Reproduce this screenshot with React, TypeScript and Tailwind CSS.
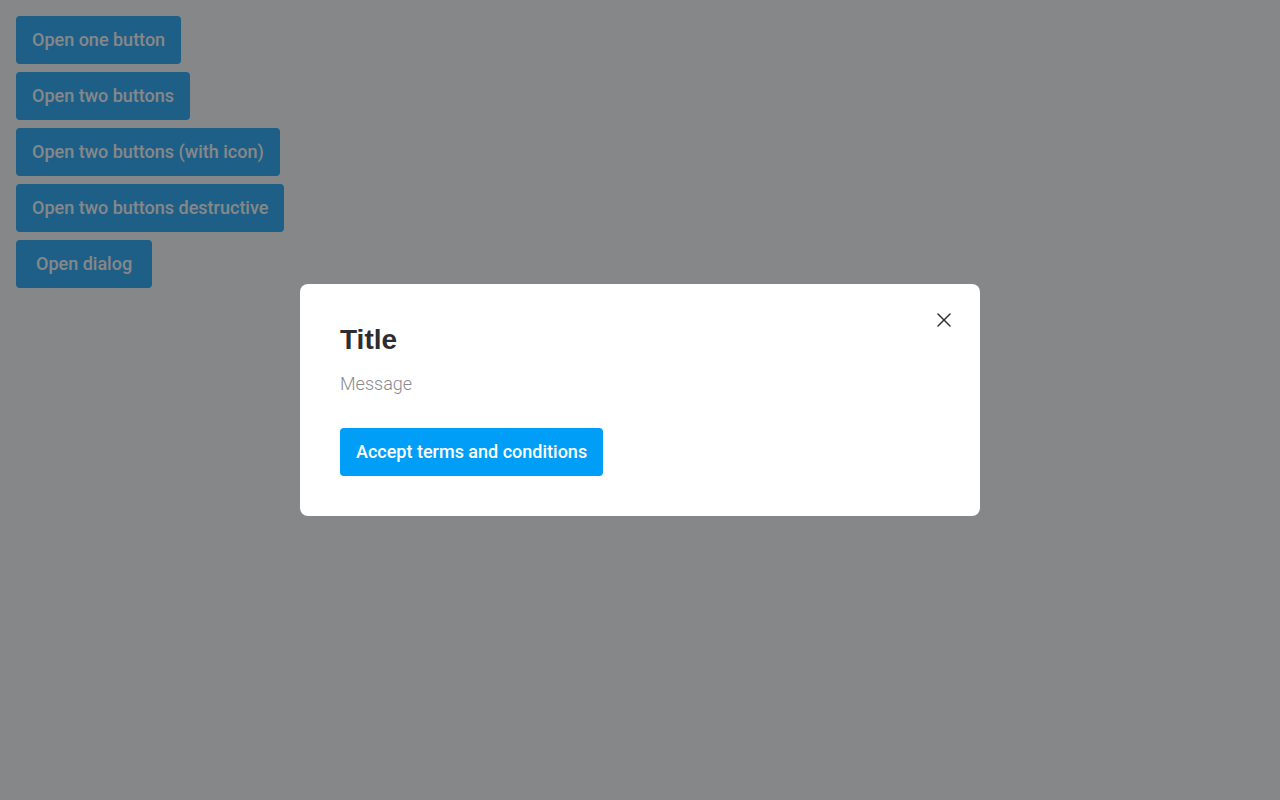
import { X } from 'lucide-react';

const triggers = [
  { label: 'Open one button', pad: 'px-4' },
  { label: 'Open two buttons', pad: 'px-4' },
  { label: 'Open two buttons (with icon)', pad: 'px-4' },
  { label: 'Open two buttons destructive', pad: 'px-4' },
  { label: 'Open dialog', pad: 'px-5' },
];

export default function App() {
  return (
    <div className="relative h-[800px] w-[1280px] overflow-hidden bg-white font-['Roboto',sans-serif]">
      <div className="flex flex-col items-start gap-2 p-4">
        {triggers.map((t) => (
          <button
            key={t.label}
            className={`h-12 rounded bg-[#009ef7] text-lg font-medium text-white ${t.pad}`}
          >
            {t.label}
          </button>
        ))}
      </div>

      {/* backdrop + dialog */}
      <div className="absolute inset-0 flex items-start justify-center bg-[rgba(50,51,54,0.59)] pt-[284px]">
        <div className="relative w-[680px] rounded-lg bg-white p-10">
          <button className="absolute right-[24px] top-[24px] flex h-6 w-6 items-center justify-center text-[#2d2d30]">
            <X size={24} strokeWidth={1.4} />
          </button>
          <h2 className="font-['Liberation_Sans',Arial,sans-serif] text-[28px] font-bold leading-8 text-[#2d2d30]">
            Title
          </h2>
          <p className="mt-[14px] text-lg font-light leading-7 text-[#8a8a8e]">Message</p>
          <button className="mt-[30px] h-12 rounded bg-[#009ef7] px-4 text-lg font-medium text-white">
            Accept terms and conditions
          </button>
        </div>
      </div>
    </div>
  );
}
